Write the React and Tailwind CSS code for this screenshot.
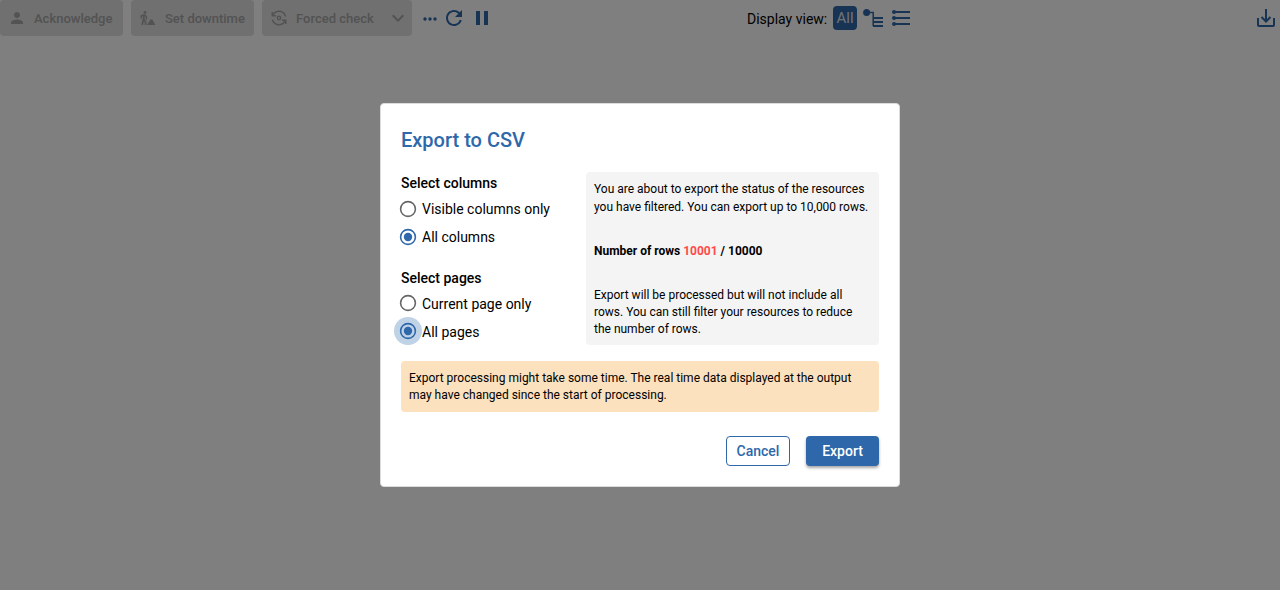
import React from "react";
import { MdPerson, MdRefresh, MdPause, MdExpandMore } from "react-icons/md";

function ToolbarButton({ className, children }) {
  return (
    <button className={`flex h-9 shrink-0 items-center whitespace-nowrap rounded-[4px] bg-[#e0e0e0] text-[13px] font-medium text-[#a6a6a6] ${className}`}>
      {children}
    </button>
  );
}

function DowntimeIcon() {
  return (
    <svg width="16" height="16" viewBox="0 0 16 16" fill="none" stroke="currentColor" className="mr-[9px] shrink-0">
      <circle cx="5" cy="2.4" r="1.4" fill="currentColor" stroke="none" />
      <path d="M3.6 4.8 1.3 6v2.6M3.9 4.6v5.2l1.6 1.8v3.4M3.4 9 2.2 15" strokeWidth="1.7" />
      <path d="m4.4 4.4 2 2.4v3" strokeWidth="1.4" />
      <path d="M7 15h8.4l-3-5.6h-2z" fill="currentColor" stroke="none" />
    </svg>
  );
}

function CheckIcon() {
  return (
    <svg width="18" height="18" viewBox="0 0 24 24" fill="currentColor" className="mr-[8px] shrink-0">
      <circle cx="12" cy="12" r="2.2" fill="none" stroke="currentColor" strokeWidth="2" />
      <path d="M8 10V8H5.09C6.47 5.61 9.05 4 12 4c3.72 0 6.85 2.56 7.74 6h2.06c-.93-4.56-4.96-8-9.8-8-3.27 0-6.18 1.58-8 4.01V4H2v6zm8 4v2h2.91c-1.38 2.39-3.96 4-6.91 4-3.72 0-6.85-2.56-7.74-6H2.2c.93 4.56 4.96 8 9.8 8 3.27 0 6.18-1.58 8-4.01V20h2v-6z" />
    </svg>
  );
}

function Toolbar() {
  return (
    <header className="flex h-9 items-center text-[#2e68aa]">
      <ToolbarButton className="w-[123px] pl-2">
        <MdPerson size={18} className="mr-[8px] shrink-0" />
        <span className="pt-0.5">Acknowledge</span>
      </ToolbarButton>
      <ToolbarButton className="ml-2 w-[123px] pl-[9px]">
        <DowntimeIcon />
        <span className="pt-0.5">Set downtime</span>
      </ToolbarButton>
      <ToolbarButton className="ml-2 w-[150px] pl-2">
        <CheckIcon />
        <span className="w-[90px] pt-0.5 text-left">Forced check</span>
        <MdExpandMore size={24} className="shrink-0" />
      </ToolbarButton>
      <svg width="14" height="4" viewBox="0 0 14 4" fill="currentColor" className="ml-[11px] mt-0.5">
        <circle cx="2" cy="2" r="1.7" />
        <circle cx="7" cy="2" r="1.7" />
        <circle cx="12" cy="2" r="1.7" />
      </svg>
      <MdRefresh size={24} className="ml-[5px]" />
      <MdPause size={24} className="ml-1" />

      <div className="ml-[253px] flex items-center">
        <span className="mt-[2px] w-[80px] whitespace-nowrap text-sm text-black">Display view:</span>
        <span className="ml-[6px] flex h-6 w-6 items-center justify-center rounded-[4px] bg-[#2e68aa] text-[15px] text-[#e5e5e5]">All</span>
        <svg width="20" height="20" viewBox="0 0 20 20" fill="none" stroke="currentColor" className="ml-[6px]">
          <circle cx="3.6" cy="4.6" r="3.5" fill="currentColor" stroke="none" />
          <path d="M5 4.5h5.2V18" strokeWidth="1.5" />
          <path d="M10 10h10M10 14h10M10 18h10" strokeWidth="2" />
        </svg>
        <svg width="18" height="16" viewBox="0 0 18 16" fill="currentColor" stroke="currentColor" className="ml-[9px]">
          <path d="M2 2h16M2 8h16M2 14h16" strokeWidth="2" />
          <circle cx="2" cy="2" r="2" stroke="none" />
          <circle cx="2" cy="8" r="2" stroke="none" />
          <circle cx="2" cy="14" r="2" stroke="none" />
        </svg>
      </div>

      <svg width="18" height="18" viewBox="0 0 18 18" fill="none" stroke="currentColor" strokeWidth="2" className="ml-auto mr-[5px]">
        <path d="M1 9v7q0 1 1 1h14q1 0 1-1V9M9 0v12M4.5 8 9 12.5 13.5 8" />
      </svg>
    </header>
  );
}

function Radio({ label, checked = false, focused = false, labelClass = "" }) {
  return (
    <label className="flex h-7 items-center text-sm leading-5">
      <span className={`-ml-[7px] flex h-7 w-7 shrink-0 items-center justify-center rounded-full ${focused ? "bg-[#c0d2e6]" : ""}`}>
        <svg width="18" height="18" viewBox="0 0 18 18" fill="none">
          <circle cx="9" cy="9" r="7.4" stroke={checked ? "#2e68aa" : "#666666"} strokeWidth="1.6" />
          {checked && <circle cx="9" cy="9" r="4.2" fill="#2e68aa" />}
        </svg>
      </span>
      <span className={`whitespace-nowrap ${labelClass}`}>{label}</span>
    </label>
  );
}

function ExportDialog() {
  return (
    <section role="dialog" className="flex h-[384px] w-[520px] flex-col rounded-[4px] border border-[#dcdcdc] bg-white px-5 text-black">
      <h2 className="mt-[21px] text-xl font-medium leading-[30px] text-[#2e68aa]">Export to CSV</h2>
      <div className="mt-[17px] flex h-[173px] justify-between">
        <div className="flex flex-col">
          <h3 className="mb-px text-sm font-medium leading-[22px]">Select columns</h3>
          <Radio label="Visible columns only" />
          <Radio label="All columns" checked />
          <h3 className="mt-4 text-sm font-medium leading-[22px]">Select pages</h3>
          <Radio label="Current page only" labelClass="mt-0.5" />
          <Radio label="All pages" checked focused labelClass="mt-0.5" />
        </div>
        <div className="h-[173px] w-[293px] rounded-[4px] bg-[#f4f4f4] px-2 pt-2 text-xs">
          <p className="whitespace-nowrap leading-[18px]">
            You are about to export the status of the resources
            <br />
            you have filtered. You can export up to 10,000 rows.
          </p>
          <p className="mt-[26px] font-bold leading-[18px]">
            Number of rows <span className="text-[#ff4a4a]">10001</span> / 10000
          </p>
          <p className="mt-[27px] whitespace-nowrap leading-[17px]">
            Export will be processed but will not include all
            <br />
            rows. You can still filter your resources to reduce
            <br />
            the number of rows.
          </p>
        </div>
      </div>
      <div className="mt-4 h-[51px] rounded-[4px] bg-[#fce1bf] px-2 pt-[9px] text-xs leading-[17px]">
        Export processing might take some time. The real time data displayed at the output
        <br />
        may have changed since the start of processing.
      </div>
      <div className="mt-6 flex justify-end gap-4 text-sm font-medium">
        <button className="h-[30px] w-16 rounded-[4px] border border-[#2e68aa] text-[#2e68aa]">Cancel</button>
        <button className="h-[30px] w-[73px] rounded-[4px] bg-[#2e68aa] text-white shadow-[0_2px_3px_rgba(0,0,0,0.35)]">Export</button>
      </div>
    </section>
  );
}

export default function App() {
  return (
    <div className="h-[590px] w-[1280px] overflow-hidden bg-white font-[Roboto,sans-serif]">
      <Toolbar />
      <div className="fixed inset-0 flex items-center justify-center bg-black/50">
        <ExportDialog />
      </div>
    </div>
  );
}
